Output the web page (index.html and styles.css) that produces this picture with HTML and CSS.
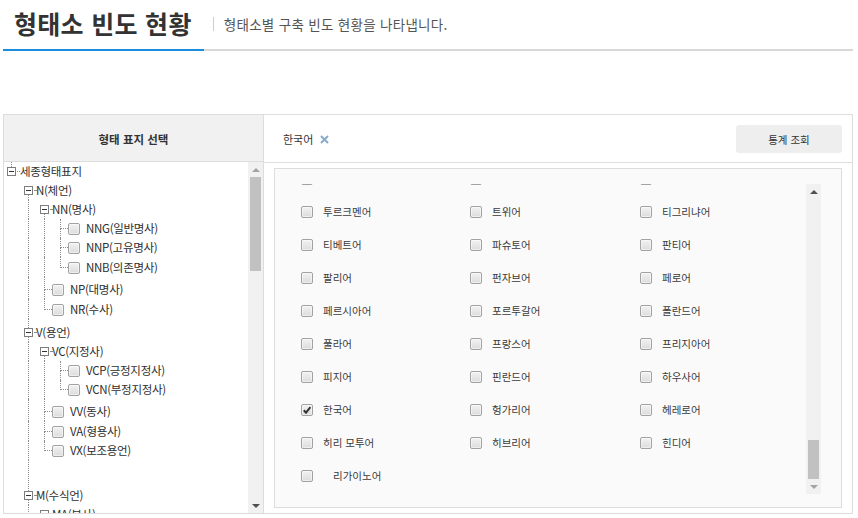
FILE: index.html
```html
<!DOCTYPE html>
<html lang="ko">
<head>
<meta charset="utf-8">
<title>형태소 빈도 현황</title>
<link rel="stylesheet" href="styles.css">
</head>
<body>
<div class="page">
  <div class="titlebar">
    <h1 class="title">형태소 빈도 현황</h1>
    <span class="sep"></span>
    <p class="desc">형태소별 구축 빈도 현황을 나타냅니다.</p>
  </div>
  <div class="rule"><span class="rule-on"></span></div>

  <div class="panel">
    <div class="left">
      <div class="left-head">형태 표지 선택</div>
      <div class="tree-wrap">
        <div class="tree">
          <div class="row">
            <span class="bx bx0 up"><span class="bxrow"><i class="mb"></i><i class="stub"></i></span></span>
            <span class="lbl">세종형태표지</span>
          </div>
          <div class="row">
            <span class="ind"></span>
            <span class="bx dn"><span class="bxrow"><i class="mb"></i><i class="stub"></i></span></span>
            <span class="lbl">N(체언)</span>
          </div>
          <div class="row">
            <span class="ind"></span><span class="vl"></span>
            <span class="bx dn"><span class="bxrow"><i class="mb"></i><i class="stub"></i></span></span>
            <span class="lbl">NN(명사)</span>
          </div>
          <div class="row">
            <span class="ind"></span><span class="vl"></span><span class="vl"></span><span class="tl t"></span>
            <span class="cb"></span><span class="lbl">NNG(일반명사)</span>
          </div>
          <div class="row">
            <span class="ind"></span><span class="vl"></span><span class="vl"></span><span class="tl t"></span>
            <span class="cb"></span><span class="lbl">NNP(고유명사)</span>
          </div>
          <div class="row h20">
            <span class="ind"></span><span class="vl"></span><span class="vl"></span><span class="tl"></span>
            <span class="cb"></span><span class="lbl">NNB(의존명사)</span>
          </div>
          <div class="row h22">
            <span class="ind"></span><span class="vl"></span><span class="tl t"></span>
            <span class="cb"></span><span class="lbl">NP(대명사)</span>
          </div>
          <div class="row h20">
            <span class="ind"></span><span class="vl"></span><span class="tl"></span>
            <span class="cb"></span><span class="lbl">NR(수사)</span>
          </div>
          <div class="row h23">
            <span class="ind"></span>
            <span class="bx up dn"><span class="bxrow"><i class="mb"></i><i class="stub"></i></span></span>
            <span class="lbl">V(용언)</span>
          </div>
          <div class="row">
            <span class="ind"></span><span class="vl"></span>
            <span class="bx dn"><span class="bxrow"><i class="mb"></i><i class="stub"></i></span></span>
            <span class="lbl">VC(지정사)</span>
          </div>
          <div class="row">
            <span class="ind"></span><span class="vl"></span><span class="vl"></span><span class="tl t"></span>
            <span class="cb"></span><span class="lbl">VCP(긍정지정사)</span>
          </div>
          <div class="row">
            <span class="ind"></span><span class="vl"></span><span class="vl"></span><span class="tl"></span>
            <span class="cb"></span><span class="lbl">VCN(부정지정사)</span>
          </div>
          <div class="row h22">
            <span class="ind"></span><span class="vl"></span><span class="tl t"></span>
            <span class="cb"></span><span class="lbl">VV(동사)</span>
          </div>
          <div class="row h20">
            <span class="ind"></span><span class="vl"></span><span class="tl t"></span>
            <span class="cb"></span><span class="lbl">VA(형용사)</span>
          </div>
          <div class="row">
            <span class="ind"></span><span class="vl"></span><span class="tl"></span>
            <span class="cb"></span><span class="lbl">VX(보조용언)</span>
          </div>
          <div class="row h45">
            <span class="ind"></span>
            <span class="bx up dn"><span class="bxrow"><i class="mb"></i><i class="stub"></i></span></span>
            <span class="lbl">M(수식언)</span>
          </div>
          <div class="row">
            <span class="ind"></span><span class="vl"></span>
            <span class="bx dn"><span class="bxrow"><i class="mb"></i><i class="stub"></i></span></span>
            <span class="lbl">MA(부사)</span>
          </div>
        </div>
        <div class="sbar">
          <span class="sbtn arr-up off"></span>
          <span class="track"><span class="thumb thumb-tree"></span></span>
          <span class="sbtn arr-dn"></span>
        </div>
      </div>
    </div>

    <div class="right">
      <div class="right-head">
        <span class="tag">한국어 <svg class="x" width="9" height="9" viewBox="0 0 9 9"><path d="M1 1L8 8M8 1L1 8" stroke="#86abcb" stroke-width="2" fill="none"/></svg></span>
        <button class="btn">통계 조회</button>
      </div>
      <div class="right-body">
        <div class="listbox">
          <div class="list-view">
            <div class="grid">
              <span class="item"><span class="cb"></span></span>
              <span class="item"><span class="cb"></span></span>
              <span class="item"><span class="cb"></span></span>

              <label class="item"><span class="cb"></span><span class="name">투르크멘어</span></label>
              <label class="item"><span class="cb"></span><span class="name">트위어</span></label>
              <label class="item"><span class="cb"></span><span class="name">티그리냐어</span></label>

              <label class="item"><span class="cb"></span><span class="name">티베트어</span></label>
              <label class="item"><span class="cb"></span><span class="name">파슈토어</span></label>
              <label class="item"><span class="cb"></span><span class="name">판티어</span></label>

              <label class="item"><span class="cb"></span><span class="name">팔리어</span></label>
              <label class="item"><span class="cb"></span><span class="name">펀자브어</span></label>
              <label class="item"><span class="cb"></span><span class="name">페로어</span></label>

              <label class="item"><span class="cb"></span><span class="name">페르시아어</span></label>
              <label class="item"><span class="cb"></span><span class="name">포르투갈어</span></label>
              <label class="item"><span class="cb"></span><span class="name">폴란드어</span></label>

              <label class="item"><span class="cb"></span><span class="name">풀라어</span></label>
              <label class="item"><span class="cb"></span><span class="name">프랑스어</span></label>
              <label class="item"><span class="cb"></span><span class="name">프리지아어</span></label>

              <label class="item"><span class="cb"></span><span class="name">피지어</span></label>
              <label class="item"><span class="cb"></span><span class="name">핀란드어</span></label>
              <label class="item"><span class="cb"></span><span class="name">하우사어</span></label>

              <label class="item"><span class="cb on"><svg width="10" height="10" viewBox="0 0 10 10"><path d="M1.8 5.2L4 7.6L8.4 2.2" stroke="#333" stroke-width="2" fill="none"/></svg></span><span class="name">한국어</span></label>
              <label class="item"><span class="cb"></span><span class="name">헝가리어</span></label>
              <label class="item"><span class="cb"></span><span class="name">헤레로어</span></label>

              <label class="item"><span class="cb"></span><span class="name">히리 모투어</span></label>
              <label class="item"><span class="cb"></span><span class="name">히브리어</span></label>
              <label class="item"><span class="cb"></span><span class="name">힌디어</span></label>

              <label class="item"><span class="cb"></span><span class="name name-pad">리가이노어</span></label>
            </div>
          </div>
          <div class="sbar">
            <span class="sbtn arr-up"></span>
            <span class="track track-end"><span class="thumb thumb-list"></span></span>
            <span class="sbtn arr-dn off"></span>
          </div>
        </div>
      </div>
    </div>
  </div>
</div>
</body>
</html>
```

FILE: styles.css
```css
html, body {
  margin: 0;
  padding: 0;
  background: #fff;
}
body {
  font-family: "Noto Sans CJK KR", "Noto Sans", "Liberation Sans", sans-serif;
  color: #333;
}
.page {
  margin-left: 3px;
  width: 850px;
}

/* title */
.titlebar {
  height: 45px;
  padding: 0 0 4px 11px;
  display: flex;
  align-items: center;
}
.title {
  margin: 0;
  font-size: 25px;
  line-height: 30px;
  font-weight: 700;
  letter-spacing: 0.3px;
  color: #333;
}
.sep {
  width: 1px;
  height: 14px;
  background: #cfcfcf;
  margin: 2px 10px 0 21px;
}
.desc {
  margin: 2px 0 0 0;
  font-size: 13.5px;
  letter-spacing: 0.3px;
  color: #555;
}
.rule {
  height: 2px;
  background: #d8d8d8;
  display: flex;
}
.rule-on {
  width: 201px;
  background: #1b8de0;
}

/* panel */
.panel {
  margin-top: 63px;
  height: 400px;
  box-sizing: border-box;
  border: 1px solid #dddddd;
  display: flex;
}
.left {
  width: 259px;
  flex: none;
  border-right: 1px solid #dddddd;
  display: flex;
  flex-direction: column;
}
.left-head {
  height: 47px;
  flex: none;
  border-bottom: 1px solid #dddddd;
  background: #f1f1f1;
  display: flex;
  align-items: center;
  justify-content: center;
  font-size: 11.5px;
  font-weight: 700;
  color: #333;
  padding-top: 1px;
  box-sizing: border-box;
}
.tree-wrap {
  flex: 1;
  min-height: 0;
  display: flex;
}
.tree {
  flex: 1;
  overflow: hidden;
}

/* tree rows */
.row {
  height: 19px;
  display: flex;
}
.row.h20 { height: 20px; }
.row.h22 { height: 22px; }
.row.h23 { height: 23px; }
.row.h45 { height: 45px; }

.ind {
  width: 16px;
  flex: none;
}
.vl {
  width: 16px;
  flex: none;
  display: flex;
  flex-direction: column;
}
.vl::before {
  content: "";
  flex: 1;
  margin-left: 8px;
  border-left: 1px dotted #8c8c8c;
}
.tl {
  width: 16px;
  flex: none;
  display: flex;
  flex-direction: column;
}
.tl::before {
  content: "";
  flex: 1;
  margin-left: 8px;
  border-left: 1px dotted #8c8c8c;
  border-bottom: 1px dotted #8c8c8c;
}
.tl::after {
  content: "";
  height: 9px;
  margin-left: 8px;
}
.tl.t::after {
  border-left: 1px dotted #8c8c8c;
}

.bx {
  width: 16px;
  flex: none;
  display: flex;
  flex-direction: column;
}
.bx::before {
  content: "";
  flex: 1;
  margin-left: 8px;
}
.bx::after {
  content: "";
  height: 5px;
  margin-left: 8px;
}
.bx.up::before { border-left: 1px dotted #8c8c8c; }
.bx.dn::after { border-left: 1px dotted #8c8c8c; }
.bx0::before, .bx0::after { margin-left: 7px; }

.bxrow {
  height: 9px;
  display: flex;
  align-items: center;
  padding-left: 4px;
}
.bx0 .bxrow { padding-left: 3px; }
.mb {
  width: 9px;
  height: 9px;
  box-sizing: border-box;
  border: 1px solid #7d7d7d;
  background: #fff;
  display: flex;
  align-items: center;
  justify-content: center;
  flex: none;
}
.mb::before {
  content: "";
  width: 5px;
  height: 1px;
  background: #333;
}
.stub {
  flex: 1;
  border-top: 1px dotted #8c8c8c;
  margin-left: 1px;
}

.lbl {
  align-self: flex-end;
  height: 19px;
  line-height: 19px;
  font-size: 11.5px;
  letter-spacing: -0.3px;
  color: #2e2e2e;
  white-space: nowrap;
}
.row .cb {
  align-self: flex-end;
  margin: 0 6px 3px 0;
}

/* checkbox */
.cb {
  width: 12px;
  height: 12px;
  flex: none;
  box-sizing: border-box;
  border: 1px solid #a2a2a2;
  border-radius: 2px;
  background: linear-gradient(#f2f2f2, #dcdcdc);
  box-shadow: inset 0 0 0 1px rgba(255,255,255,0.5);
  display: flex;
  align-items: center;
  justify-content: center;
}

/* scrollbars */
.sbar {
  width: 15px;
  flex: none;
  background: #f1f1f1;
  display: flex;
  flex-direction: column;
}
.sbtn {
  height: 15px;
  flex: none;
  display: flex;
  align-items: center;
  justify-content: center;
}
.arr-up::before {
  content: "";
  border-left: 4px solid transparent;
  border-right: 4px solid transparent;
  border-bottom: 4px solid #505050;
}
.arr-dn::before {
  content: "";
  border-left: 4px solid transparent;
  border-right: 4px solid transparent;
  border-top: 4px solid #505050;
}
.arr-up.off::before { border-bottom-color: #a3a3a3; }
.arr-dn.off::before { border-top-color: #a3a3a3; }
.track {
  flex: 1;
  display: flex;
  flex-direction: column;
  padding: 0 2px;
}
.track-end {
  justify-content: flex-end;
}
.thumb {
  background: #c1c1c1;
  flex: none;
}
.thumb-tree { height: 94px; }
.thumb-list { height: 39px; }

/* right */
.right {
  flex: 1;
  display: flex;
  flex-direction: column;
  min-width: 0;
}
.right-head {
  height: 48px;
  flex: none;
  box-sizing: border-box;
  border-bottom: 1px solid #dddddd;
  display: flex;
  align-items: center;
  justify-content: space-between;
  padding: 1px 10px 0 19px;
}
.tag {
  font-size: 11px;
  color: #333;
  display: flex;
  align-items: center;
  gap: 7px;
}
.x {
  display: block;
  margin-top: 1px;
}
.btn {
  width: 106px;
  height: 28px;
  border: none;
  border-radius: 3px;
  background: #eeeeee;
  font-family: inherit;
  font-size: 10.5px;
  color: #333;
  padding: 0;
}
.right-body {
  flex: 1;
  min-height: 0;
  padding: 5px 10px;
  display: flex;
}
.listbox {
  flex: 1;
  box-sizing: border-box;
  border: 1px solid #dddddd;
  background: #fafafa;
  display: flex;
  padding: 15px 20px 13px 0;
}
.list-view {
  flex: 1;
  overflow: hidden;
}
.grid {
  display: grid;
  grid-template-columns: 169px 170px 1fr;
  padding-left: 26px;
  margin-top: -22px;
}
.item {
  height: 33px;
  display: flex;
  align-items: center;
}
.item .cb {
  margin-right: 10px;
}
.name {
  font-size: 10.5px;
  color: #3a3a3a;
  white-space: nowrap;
}
.name-pad {
  padding-left: 10px;
}
```
